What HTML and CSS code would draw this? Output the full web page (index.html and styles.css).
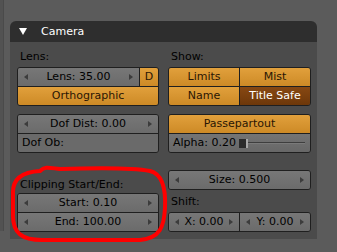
FILE: index.html
```html
<!DOCTYPE html>
<html lang="en">
<head>
  <meta charset="UTF-8" />
  <title>Camera</title>
  <link rel="stylesheet" href="styles.css">
</head>
<body>

<div class="screen">
  <div class="edge"></div>

  <div class="panel">
    <div class="panel-head">
      <svg class="tri" width="8" height="7" viewBox="0 0 8 7"><path d="M0 0 H8 L4 7 Z" fill="#fff"/></svg>
      <span>Camera</span>
    </div>

    <div class="panel-body">
      <!-- left column -->
      <div class="col">
        <div class="label">Lens:</div>
        <div class="group">
          <div class="row">
            <div class="cell num">Lens: 35.00</div>
            <div class="cell orange d-btn">D</div>
          </div>
          <div class="row">
            <div class="cell orange">Orthographic</div>
          </div>
        </div>

        <div class="group gap">
          <div class="row"><div class="cell num">Dof Dist: 0.00</div></div>
          <div class="row"><div class="cell text">Dof Ob:</div></div>
        </div>

        <div class="label clip-label">Clipping Start/End:</div>
        <div class="group">
          <div class="row"><div class="cell num">Start: 0.10</div></div>
          <div class="row"><div class="cell num">End: 100.00</div></div>
        </div>
      </div>

      <!-- right column -->
      <div class="col">
        <div class="label">Show:</div>
        <div class="group">
          <div class="row">
            <div class="cell orange">Limits</div>
            <div class="cell orange">Mist</div>
          </div>
          <div class="row">
            <div class="cell orange">Name</div>
            <div class="cell dark">Title Safe</div>
          </div>
        </div>

        <div class="group gap">
          <div class="row"><div class="cell orange">Passepartout</div></div>
          <div class="row">
            <div class="cell slider">
              <span>Alpha: 0.20</span>
              <span class="knob"></span>
              <span class="track"></span>
            </div>
          </div>
        </div>

        <div class="group size-group">
          <div class="row"><div class="cell num">Size: 0.500</div></div>
        </div>

        <div class="label shift-label">Shift:</div>
        <div class="group">
          <div class="row">
            <div class="cell num">X: 0.00</div>
            <div class="cell num">Y: 0.00</div>
          </div>
        </div>
      </div>
    </div>
  </div>

  <svg class="mark" width="337" height="252" viewBox="0 0 337 252">
    <path d="M40 171 C45 166 50 168 60 169 C90 168 130 167 150 171 C162 174 166 188 165 208 C164 227 160 238 140 240 L42 240 C22 240 13 233 13 216 L13 192 C13 179 22 172 40 171 Z"
          fill="none" stroke="#f00" stroke-width="4" stroke-linejoin="round"/>
  </svg>
</div>

</body>
</html>
```

FILE: styles.css
```css
* {
  margin: 0; padding: 0; box-sizing: border-box;
}
body {
  background: #5b5b5b;
  font-family: 'DejaVu Sans', sans-serif;
  font-size: 11px;
  color: #000;
}
.screen {
  position: relative;
  width: 337px;
  height: 252px;
  display: flex;
  align-items: flex-start;
  padding-top: 21px;
}
.edge {
  width: 4px;
  height: 231px;
  margin-top: -21px;
  background: #525252;
  border-right: 1px solid #4a4a4a;
}
.panel {
  margin-left: 6px;
  width: 307px;
}
.panel-head {
  height: 21px;
  background: #2e2e2e;
  border-radius: 6px 6px 0 0;
  display: flex;
  align-items: center;
  color: #fff;
  line-height: 21px;
}
.tri {
  margin-left: 9px;
  margin-right: 14px;
}
.panel-body {
  background: #4b4b4b;
  height: 197px;
  padding: 8px 6px 0 7px;
  display: flex;
  gap: 9px;
}
.col {
  width: 142px;
  display: flex;
  flex-direction: column;
}
.col + .col {
  width: 143px;
}
.label {
  height: 14px;
  line-height: 14px;
  margin-bottom: 3px;
  padding-left: 3px;
  white-space: nowrap;
}
.clip-label {
  margin-top: 25px;
  margin-bottom: 1px;
}
.shift-label {
  margin-top: 5px;
  margin-bottom: 3px;
}
.group {
  border: 1px solid #1f1f1f;
  border-radius: 3px;
  overflow: hidden;
}
.group.gap {
  margin-top: 8px;
}
.size-group {
  margin-top: 17px;
}
.row {
  display: flex;
  height: 18px;
}
.row + .row {
  border-top: 1px solid #1f1f1f;
  height: 19px;
}
.cell {
  flex: 1;
  position: relative;
  line-height: 18px;
  text-align: center;
  white-space: nowrap;
}
.cell + .cell {
  border-left: 1px solid #1f1f1f;
}
.num {
  background: linear-gradient(#777, #6b6b6b);
}
.num::before, .num::after {
  content: "";
  position: absolute;
  top: 6px;
  border-top: 3px solid transparent;
  border-bottom: 3px solid transparent;
}
.num::before {
  left: 6px;
  border-right: 4px solid #3c3c3c;
}
.num::after {
  right: 6px;
  border-left: 4px solid #3c3c3c;
}
.text {
  background: #6a6a6a;
  text-align: left;
  padding-left: 4px;
}
.orange {
  background: linear-gradient(#e1a03c, #cd8a26);
  color: #2a1604;
}
.d-btn {
  flex: 0 0 19px;
}
.dark {
  background: linear-gradient(#874812, #6d3709);
  color: #fff;
}
.slider {
  background: linear-gradient(#747474, #676767);
  display: flex;
  align-items: center;
  padding-left: 4px;
  text-align: left;
}
.knob {
  width: 9px;
  height: 9px;
  margin-left: 3px;
  background: #2c2c2c;
  border-right: 2px solid #a8a8a8;
}
.track {
  flex: 1;
  height: 2px;
  margin-right: 5px;
  border-top: 1px solid #3e3e3e;
  border-bottom: 1px solid #7a7a7a;
}
.mark {
  position: absolute;
  top: 0;
  left: 0;
  pointer-events: none;
}
```
